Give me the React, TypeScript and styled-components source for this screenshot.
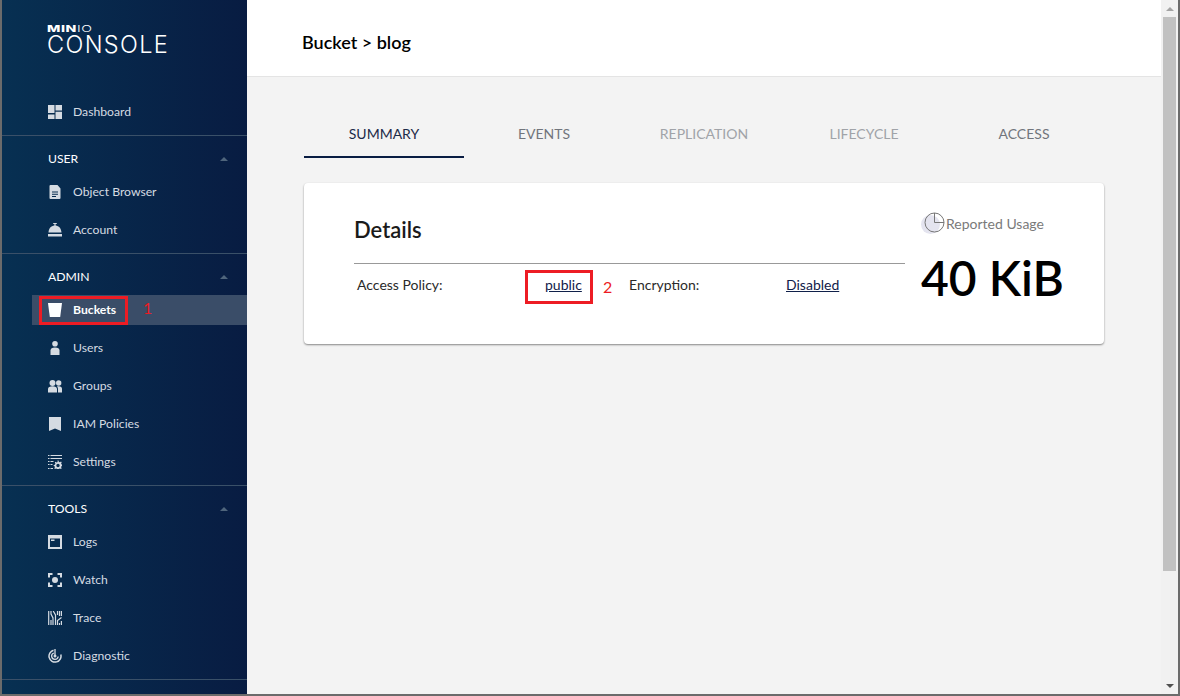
import React from "react";
import styled, { createGlobalStyle } from "styled-components";

const Global = createGlobalStyle`
  html, body { margin: 0; padding: 0; height: 100%; overflow: hidden; }
  body { font-family: Lato, "Liberation Sans", sans-serif; background: #6b6b6b; }
  * { box-sizing: border-box; }
`;
const Frame = styled.div`
  width: 1180px; height: 696px; display: flex; overflow: hidden;
  border-left: 2px solid #6b6b6b; border-right: 2px solid #6b6b6b; border-bottom: 2px solid #6b6b6b;
  background: #f3f3f3;
`;
const Sidebar = styled.aside`
  width: 245px; flex: none; display: flex; flex-direction: column; color: #d5dbe2;
  background: linear-gradient(90deg, #073052 0%, #081c42 100%);
`;
const Logo = styled.div`
  height: 93px; padding: 23px 0 0 45px; color: #fff; display: flex; flex-direction: column; align-items: flex-start;
`;
const LogoTop = styled.div`
  font-family: Inter, sans-serif; font-size: 9.500px; line-height: 12px; font-weight: 800; letter-spacing: .4px;
  transform: scaleX(1.49); transform-origin: left center;
  span { font-weight: 300; }
`;
const LogoMain = styled.div`
  font-family: Inter, sans-serif; font-size: 23.500px; line-height: 20px; font-weight: 300; letter-spacing: 1.350px;
`;
const Section = styled.section`
  display: flex; flex-direction: column; border-bottom: 1px solid #3a5068; padding-bottom: 4px;
`;
const SectionHead = styled.div`
  height: 37px; padding: 13px 19px 4px 46px; display: flex; align-items: center; justify-content: space-between;
  font-size: 12.200px; line-height: 20px; color: #fff;
`;
const Caret = styled.i`
  width: 0; height: 0; border-left: 4.500px solid transparent; border-right: 4.500px solid transparent; border-bottom: 4.500px solid #4f657c;
`;
const Row = styled.div<{ $active?: boolean }>`
  position: relative; height: 30px; margin: 4px 0 4px 30px; padding-left: 16px; display: flex; align-items: center; gap: 11px;
  font-size: 12.200px; color: ${p => p.$active ? "#fff" : "#d5dbe2"}; font-weight: ${p => p.$active ? 700 : 400};
  background: ${p => p.$active ? "#3a4d68" : "transparent"};
  svg { width: 14px; height: 14px; flex: none; fill: ${p => p.$active ? "#fff" : "#d5dbe2"}; }
`;
const RowLabel = styled.span`
  padding-bottom: 2px;
`;
const RedBox = styled.div<{ $w: number; $h: number; $x: number; $y: number }>`
  position: absolute; left: ${p => p.$x}px; top: ${p => p.$y}px; width: ${p => p.$w}px; height: ${p => p.$h}px;
  border: 3px solid #ed1c24; pointer-events: none;
`;
const RedNum = styled.span<{ $x: number; $y: number }>`
  position: absolute; left: ${p => p.$x}px; top: ${p => p.$y}px; font-size: 16px; line-height: 20px; font-weight: 400; color: #ed1c24;
`;
const Main = styled.main`
  flex: 1; min-width: 0; display: flex; flex-direction: column;
`;
const Header = styled.header`
  height: 77px; flex: none; background: #fff; border-bottom: 1px solid #e4e4e4; padding: 8px 0 0 55px; display: flex; align-items: center;
  font-size: 18px; font-weight: 600; color: #000;
`;
const Body = styled.div`
  padding: 0 0 0 57px; width: 857px;
`;
const Tabs = styled.nav`
  display: flex; height: 81px; padding-top: 37px;
`;
const Tab = styled.div<{ $state: "active" | "idle" | "off" }>`
  width: 160px; height: 44px; padding-bottom: 4px; display: flex; align-items: center; justify-content: center; font-size: 14px; text-transform: uppercase;
  color: ${p => p.$state === "active" ? "#1c2a48" : p.$state === "off" ? "#a0a3a8" : "#71757c"};
  border-bottom: 2px solid ${p => p.$state === "active" ? "#081c42" : "transparent"};
`;
const Card = styled.div`
  margin-top: 25px; height: 161px; background: #fff; border-radius: 4px; padding: 0 42px 0 50px; display: flex;
  box-shadow: 0 1px 2px rgba(0,0,0,.45);
`;
const DetailCol = styled.div`
  width: 551px; flex: none; display: flex; flex-direction: column;
`;
const CardTitle = styled.h2`
  margin: 0; height: 81px; padding-top: 32px; font-size: 22px; line-height: 30px; font-weight: 600; color: #1a1a1a; border-bottom: 1px solid #999;
`;
const Facts = styled.div`
  display: grid; grid-template-columns: 188px 84px 157px auto; padding: 11px 0 0 3px; font-size: 14px; line-height: 20px; color: #2a2a2a;
`;
const ValueCell = styled.div`
  position: relative;
  a { color: #10204a; text-decoration: underline; }
`;
const UsageCol = styled.div`
  flex: 1; padding: 28px 0 0 16px; display: flex; flex-direction: column;
`;
const UsageLabel = styled.div`
  display: flex; align-items: center; gap: 1px; font-size: 14px; height: 24px; color: #7a7a7a;
`;
const PieWrap = styled.div`
  position: relative; width: 24px; height: 22px;
  &::before { content: ""; position: absolute; left: 0; top: 3px; width: 19px; height: 19px; border-radius: 50%; background: #e4e4ef; }
  svg { position: absolute; left: 3px; top: 0; }
`;
const UsageValue = styled.div`
  font-size: 48px; line-height: 58px; font-weight: 600; color: #000; margin-top: 14px; white-space: nowrap;
`;
const Scrollbar = styled.div`
  width: 17px; flex: none; background: #f1f1f1; display: flex; flex-direction: column; align-items: center;
`;
const ScrollArrow = styled.div<{ $dir: "up" | "down" }>`
  height: 17px; width: 100%; flex: none; display: flex; align-items: center; justify-content: center;
  &::before { content: ""; border-left: 4px solid transparent; border-right: 4px solid transparent;
    ${p => p.$dir === "up" ? "border-bottom: 4px solid #a3a3a3;" : "border-top: 4px solid #505050;"} }
`;
const ScrollTrack = styled.div`flex: 1; width: 100%; padding: 0 2px;`;
const Thumb = styled.div`height: 554px; background: #c1c1c1;`;

const I = {
  dash: <svg viewBox="0 0 14 14"><path d="M0 0h6.500v8H0zM7.500 0H14v5.500H7.500zM0 9.500h6.500V14H0zM7.500 6.800H14V14H7.500z" /></svg>,
  file: <svg viewBox="0 0 14 14"><path fillRule="evenodd" d="M3 0h6.500L12.500 3.500V13a1 1 0 0 1-1 1H2.500a1 1 0 0 1-1-1V1a1 1 0 0 1 1-1zM4 6.500v1h6v-1zM4 8.800v1h6v-1zM4 11v1h4v-1z" /></svg>,
  bell: <svg viewBox="0 0 14 14"><path d="M5.200 0h3.600v1H7.600v1.500C11 2.800 13.200 5.400 13.500 9.500H.5C.8 5.400 3 2.800 6.400 2.500V1H5.200zM0 11h14v2.500H0z" /></svg>,
  bucket: <svg viewBox="0 0 14 14"><path d="M0 0h14l-1.800 14H1.800z" /></svg>,
  user: <svg viewBox="0 0 14 14"><circle cx="7" cy="2.800" r="2.800" /><path d="M2.500 14V9.500C2.500 7.500 4 6.500 7 6.500s4.500 1 4.500 3V14z" /></svg>,
  group: <svg viewBox="0 0 14 14"><circle cx="4.500" cy="4" r="3" /><circle cx="10.700" cy="4" r="2.700" /><path d="M0 13.500V10c0-1.800 1.800-2.700 4.500-2.700S9 8.200 9 10v3.500zM10 13.500V10c0-1-.4-2-1.200-2.500.6-.2 1.300-.3 2-.3 2 0 3.200 1 3.200 2.600v3.700z" /></svg>,
  mark: <svg viewBox="0 0 14 14"><path d="M1 0h12v14l-6-2.500L1 14z" /></svg>,
  gear: <svg viewBox="0 0 14 14"><path fillRule="evenodd" d="M0 0h1.500v1H0zM2.500 0H14v1H2.500zM0 3h1.500v1H0zM2.500 3H14v1H2.500zM0 6h1.500v1H0zM2.500 6h3v1h-3zM0 9h1.500v1H0zM2.500 9h2v1h-2zM0 13h1.500v1H0zM2.500 13h2.500v1H2.500zM9.500 5.500h1l.3 1.200 1.100.5 1.100-.6.7.7-.6 1.100.5 1.100 1.200.3v1l-1.200.3-.5 1.100.6 1.100-.7.7-1.100-.6-1.100.5-.3 1.200h-1l-.3-1.200-1.100-.5-1.100.6-.7-.7.6-1.100-.5-1.100L5.700 11v-1l1.200-.3.5-1.100-.6-1.100.7-.7 1.100.6 1.100-.5zM10 8.800a1.700 1.700 0 1 0 0 3.400 1.700 1.700 0 0 0 0-3.400z" /></svg>,
  logs: <svg viewBox="0 0 14 14"><path fillRule="evenodd" d="M0 0h14v14H0zM2 3.500V12h10V3.500zM3 4.500h3.500v1.400H3z" /></svg>,
  watch: <svg viewBox="0 0 14 14"><circle cx="7" cy="7" r="3" /><path d="M0 0h4.500v2H2v2.500H0zM9.500 0H14v4.500h-2V2H9.500zM0 9.500h2V12h2.500v2H0zM12 9.500h2V14H9.500v-2H12z" /></svg>,
  trace: <svg viewBox="0 0 14 14"><g fill="none" stroke="#d5dbe2" strokeWidth="1.200"><path d="M.7 0v14M3 0v3l2 4v7M3 9v5M5.200 0l2.300 4v10M9.500 0v4M11.500 0v5M13.400 0v5M9.500 14V9.500l4-3M13.400 10v4M11.500 12v2" /></g></svg>,
  diag: <svg viewBox="0 0 14 14"><g fill="none" stroke="#d5dbe2"><path strokeWidth="1.500" d="M5.500 1.300A6 6 0 1 0 12.800 5.500" /><path strokeWidth="1.300" d="M5.800 4A3.300 3.300 0 1 0 10.200 7.500" /><path strokeWidth="1.300" d="M7 0v6" /></g><circle cx="7" cy="7" r="1.500" fill="#d5dbe2" /></svg>,
};

const Item = ({ icon, label }: { icon: React.ReactNode; label: string }) => (
  <Row>{icon}<RowLabel>{label}</RowLabel></Row>
);

export default function App() {
  return (
    <>
      <Global />
      <Frame>
        <Sidebar>
          <Logo>
            <LogoTop>MIN<span>IO</span></LogoTop>
            <LogoMain>CONSOLE</LogoMain>
          </Logo>
          <Section><Item icon={I.dash} label="Dashboard" /></Section>
          <Section>
            <SectionHead>USER<Caret /></SectionHead>
            <Item icon={I.file} label="Object Browser" />
            <Item icon={I.bell} label="Account" />
          </Section>
          <Section>
            <SectionHead>ADMIN<Caret /></SectionHead>
            <Row $active>
              {I.bucket}<RowLabel>Buckets</RowLabel>
              <RedBox $x={7} $y={1} $w={89} $h={29} />
              <RedNum $x={111} $y={3}>1</RedNum>
            </Row>
            <Item icon={I.user} label="Users" />
            <Item icon={I.group} label="Groups" />
            <Item icon={I.mark} label="IAM Policies" />
            <Item icon={I.gear} label="Settings" />
          </Section>
          <Section>
            <SectionHead>TOOLS<Caret /></SectionHead>
            <Item icon={I.logs} label="Logs" />
            <Item icon={I.watch} label="Watch" />
            <Item icon={I.trace} label="Trace" />
            <Item icon={I.diag} label="Diagnostic" />
          </Section>
        </Sidebar>
        <Main>
          <Header>Bucket &gt; blog</Header>
          <Body>
            <Tabs>
              <Tab $state="active">Summary</Tab>
              <Tab $state="idle">Events</Tab>
              <Tab $state="off">Replication</Tab>
              <Tab $state="off">Lifecycle</Tab>
              <Tab $state="idle">Access</Tab>
            </Tabs>
            <Card>
              <DetailCol>
                <CardTitle>Details</CardTitle>
                <Facts>
                  <div>Access Policy:</div>
                  <ValueCell>
                    <a>public</a>
                    <RedBox $x={-20} $y={-5} $w={68} $h={34} />
                    <RedNum $x={58} $y={2}>2</RedNum>
                  </ValueCell>
                  <div>Encryption:</div>
                  <ValueCell><a>Disabled</a></ValueCell>
                </Facts>
              </DetailCol>
              <UsageCol>
                <UsageLabel>
                  <PieWrap>
                    <svg width="22" height="22" viewBox="0 0 22 22" fill="none" stroke="#777" strokeWidth="1">
                      <circle cx="10.500" cy="10.500" r="9.500" />
                      <path d="M10.500 1v9.500H20" />
                    </svg>
                  </PieWrap>
                  Reported Usage
                </UsageLabel>
                <UsageValue>40 KiB</UsageValue>
              </UsageCol>
            </Card>
          </Body>
        </Main>
        <Scrollbar>
          <ScrollArrow $dir="up" />
          <ScrollTrack><Thumb /></ScrollTrack>
          <ScrollArrow $dir="down" />
        </Scrollbar>
      </Frame>
    </>
  );
}
